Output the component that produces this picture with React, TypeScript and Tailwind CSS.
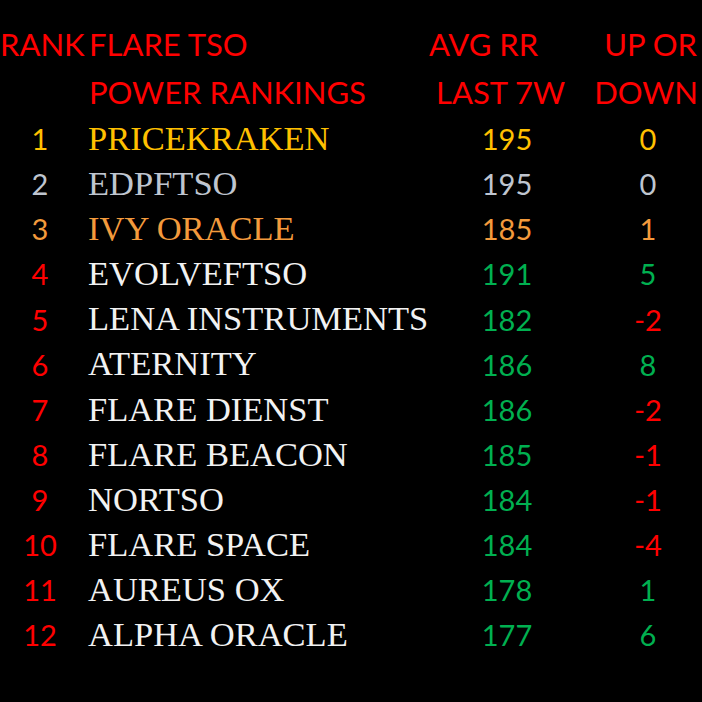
import React from 'react';

type Row = { rank: number; name: string; avg: number; change: number };

const rows: Row[] = [
  { rank: 1, name: 'PRICEKRAKEN', avg: 195, change: 0 },
  { rank: 2, name: 'EDPFTSO', avg: 195, change: 0 },
  { rank: 3, name: 'IVY ORACLE', avg: 185, change: 1 },
  { rank: 4, name: 'EVOLVEFTSO', avg: 191, change: 5 },
  { rank: 5, name: 'LENA INSTRUMENTS', avg: 182, change: -2 },
  { rank: 6, name: 'ATERNITY', avg: 186, change: 8 },
  { rank: 7, name: 'FLARE DIENST', avg: 186, change: -2 },
  { rank: 8, name: 'FLARE BEACON', avg: 185, change: -1 },
  { rank: 9, name: 'NORTSO', avg: 184, change: -1 },
  { rank: 10, name: 'FLARE SPACE', avg: 184, change: -4 },
  { rank: 11, name: 'AUREUS OX', avg: 178, change: 1 },
  { rank: 12, name: 'ALPHA ORACLE', avg: 177, change: 6 },
];

// podium colours, everyone else gets red rank / white name / green score
const podium: Record<number, string> = {
  1: 'text-[#ffc000]',
  2: 'text-[#bfc5cf]',
  3: 'text-[#f39a3c]',
};

const sans = "font-['Lato','Open_Sans',sans-serif]";
const serif = "font-['Liberation_Serif','Times_New_Roman',serif]";

export default function App() {
  return (
    <div className="w-[702px] h-[702px] bg-black overflow-hidden pt-[20px]">
      {/* header */}
      <div className={`${sans} text-[#f00] text-[31px] leading-[48px]`}>
        <div className="grid grid-cols-[80px_368px_118px_136px] h-[48px]">
          <div className="whitespace-nowrap">RANK</div>
          <div className="pl-[9px]">FLARE TSO</div>
          <div className="-ml-[19px] whitespace-nowrap">AVG RR</div>
          <div className="text-right pr-[5px] whitespace-nowrap">UP OR</div>
        </div>
        <div className="grid grid-cols-[80px_368px_118px_136px] h-[48px]">
          <div />
          <div className="pl-[9px] whitespace-nowrap">POWER RANKINGS</div>
          <div className="-ml-[12px] whitespace-nowrap">LAST 7W</div>
          <div className="text-right pr-[4px] whitespace-nowrap">DOWN</div>
        </div>
      </div>

      {/* table rows */}
      <div className="-mt-[3px]">
        {rows.map((r) => {
          const top = podium[r.rank];
          return (
            <div
              key={r.rank}
              className="grid grid-cols-[80px_368px_118px_136px] h-[45.1px] items-center"
            >
              <div className={`${sans} text-[29px] text-center ${top ?? 'text-[#f00]'}`}>{r.rank}</div>
              <div className={`${serif} text-[34.5px] pl-[8px] whitespace-nowrap ${top ?? 'text-[#f2f2f2]'}`}>
                {r.name}
              </div>
              <div className={`${sans} text-[29px] text-center ${top ?? 'text-[#00b050]'}`}>{r.avg}</div>
              <div
                className={`${sans} text-[29px] text-center pl-[28px] ${
                  top ?? (r.change < 0 ? 'text-[#f00]' : 'text-[#00b050]')
                }`}
              >
                {r.change}
              </div>
            </div>
          );
        })}
      </div>
    </div>
  );
}
